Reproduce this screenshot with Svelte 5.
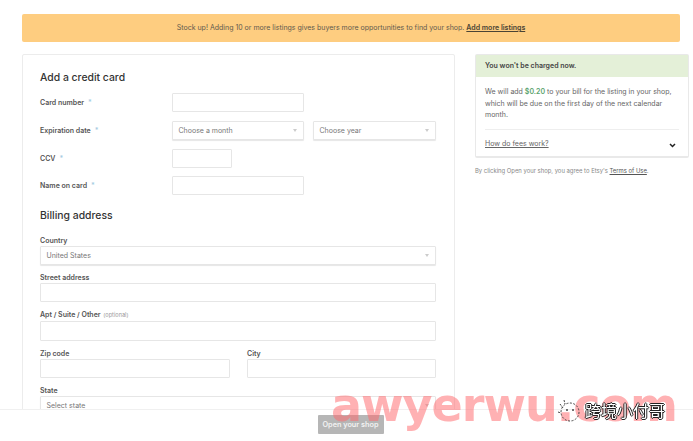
<script>
  const cardRows = [
    { label: 'Card number', size: 'wide' },
    { label: 'Expiration date', selects: true },
    { label: 'CCV', size: 'short' },
    { label: 'Name on card', size: 'wide' }
  ];
</script>

<div class="page">
  <div class="banner">
    Stock up! Adding 10 or more listings gives buyers more opportunities to find your shop. <a href="#more">Add more listings</a>
  </div>

  <div class="columns">
    <main class="card">
      <h2 class="title">Add a credit card</h2>
      <div class="rows">
        {#each cardRows as row}
          <div class="row">
            <span class="label">{row.label}<span class="req">*</span></span>
            {#if row.selects}
              <div class="select month">Choose a month<i class="caret"></i></div>
              <div class="select year">Choose year<i class="caret"></i></div>
            {:else}
              <div class="input {row.size}"></div>
            {/if}
          </div>
        {/each}
      </div>

      <h2 class="title billing">Billing address</h2>
      <div class="fields">
        <div class="field">
          <span class="label">Country</span>
          <div class="select">United States<i class="caret"></i></div>
        </div>
        <div class="field">
          <span class="label">Street address</span>
          <div class="input"></div>
        </div>
        <div class="field">
          <span class="label">Apt / Suite / Other <small>(optional)</small></span>
          <div class="input tall"></div>
        </div>
        <div class="pair">
          <div class="field">
            <span class="label">Zip code</span>
            <div class="input"></div>
          </div>
          <div class="field">
            <span class="label">City</span>
            <div class="input"></div>
          </div>
        </div>
        <div class="field">
          <span class="label">State</span>
          <div class="select">Select state<i class="caret"></i></div>
        </div>
      </div>
    </main>

    <aside class="side">
      <div class="panel">
        <div class="panel-head">You won't be charged now.</div>
        <div class="panel-body">
          <p>We will add <b>$0.20</b> to your bill for the listing in your shop, which will be due on the first day of the next calendar month.</p>
          <div class="fees">
            <a href="#fees">How do fees work?</a>
            <svg width="7" height="5" viewBox="0 0 7 5" aria-hidden="true"><path d="M1 1l2.5 2.5L6 1" fill="none" stroke="#222" stroke-width="1.5"/></svg>
          </div>
        </div>
      </div>
      <p class="terms">By clicking Open your shop, you agree to Etsy's <a href="#terms">Terms of Use</a>.</p>
    </aside>
  </div>
</div>

<footer class="bar">
  <button class="open">Open your shop</button>
</footer>

<div class="watermark">awyerwu.com</div>
<div class="wechat">
  <svg width="26" height="26" viewBox="0 0 26 26" aria-hidden="true">
    <circle cx="14" cy="15" r="9" fill="none" stroke="#444" stroke-width="1" stroke-dasharray="2 1.5"/>
    <path d="M4 7l3 4M2 15l3 1M8 3l1 4" stroke="#444" stroke-width="1" stroke-dasharray="2 1"/>
    <circle cx="11" cy="13" r="1" fill="#444"/><circle cx="17" cy="13" r="1" fill="#444"/>
  </svg>
  <span>跨境小付哥</span>
</div>

<style>
  :global(html), :global(body) {
    margin: 0;
    height: 441px;
    overflow: hidden;
    background: #fff;
  }
  .page {
    font-family: Inter, "Liberation Sans", sans-serif;
    color: #444;
    padding: 14px 4px 0 22px;
    height: 427px;
    overflow: hidden;
  }
  .banner {
    width: 658px;
    height: 28px;
    box-sizing: border-box;
    background: #fecd80;
    border-radius: 2px;
    font-size: 7px;
    line-height: 28px;
    text-align: center;
    color: #5f5a4e;
  }
  .banner a {
    color: #4a4334;
    font-weight: 600;
    text-decoration: underline;
  }
  .columns {
    display: flex;
    align-items: flex-start;
    gap: 20px;
    margin-top: 12px;
  }
  .card {
    width: 433px;
    box-sizing: border-box;
    border: 1px solid #ececec;
    padding: 16px 18px 60px 17px;
    border-radius: 2px;
  }
  .title {
    margin: 0;
    font-size: 10.4px;
    line-height: 13px;
    font-weight: 500;
    color: #333;
  }
  .billing {
    margin: 14px 0 13px;
  }
  .rows {
    margin-top: 9px;
    display: flex;
    flex-direction: column;
    gap: 8.8px;
  }
  .row {
    display: grid;
    grid-template-columns: 132px 132px 132px;
    column-gap: 0;
    align-items: center;
  }
  .label {
    font-size: 7px;
    line-height: 11px;
    font-weight: 600;
    color: #555;
  }
  .label small {
    font-size: 5.6px;
    font-weight: 400;
    color: #999;
    margin-left: 1px;
  }
  .req {
    color: #a5cbe2;
    margin-left: 4px;
  }
  .input, .select {
    box-sizing: border-box;
    height: 19px;
    border: 1px solid #e6e6e6;
    border-radius: 1px;
    background: #fff;
  }
  .input.tall {
    height: 20px;
  }
  .input.wide {
    width: 132px;
  }
  .input.short {
    width: 60px;
  }
  .select {
    position: relative;
    padding-left: 5.5px;
    font-size: 7px;
    line-height: 17px;
    color: #777;
    box-shadow: 0 1px 1px rgba(0, 0, 0, 0.1);
  }
  .select.year {
    margin-left: 9px;
  }
  .caret {
    position: absolute;
    right: 6px;
    top: 7px;
    border-left: 2.5px solid transparent;
    border-right: 2.5px solid transparent;
    border-top: 3px solid #ccc;
  }
  .fields {
    display: flex;
    flex-direction: column;
    gap: 6.8px;
  }
  .field {
    display: flex;
    flex-direction: column;
  }
  .pair {
    display: grid;
    grid-template-columns: 190px 189px;
    column-gap: 17px;
  }
  .side {
    width: 214px;
  }
  .panel {
    box-sizing: border-box;
    height: 104px;
    border: 1px solid #e9e9e9;
    border-bottom-width: 2px;
    border-radius: 2px;
  }
  .panel-head {
    height: 22px;
    padding-left: 9px;
    background: #e4f0d8;
    font-size: 7px;
    font-weight: 600;
    line-height: 21px;
    color: #444;
  }
  .panel-body {
    padding: 9px 9px 0;
  }
  .panel-body p {
    margin: 0;
    font-size: 7px;
    line-height: 11.7px;
    color: #666;
  }
  .panel-body b {
    color: #5ba36e;
    font-weight: 600;
  }
  .fees {
    display: flex;
    justify-content: space-between;
    align-items: center;
    margin-top: 8px;
    padding-top: 8px;
    border-top: 1px solid #eeeeee;
    font-size: 7px;
    line-height: 11px;
  }
  .fees svg {
    margin-top: 3px;
    margin-right: 3px;
  }
  .fees a {
    color: #666;
  }
  .terms {
    margin: 8px 0 0;
    font-size: 5.9px;
    line-height: 9px;
    color: #888;
  }
  .terms a {
    color: #555;
  }
  .bar {
    position: fixed;
    left: 0;
    right: 0;
    bottom: 0;
    height: 32px;
    background: #fff;
    border-top: 1px solid #f0f0f0;
    box-sizing: border-box;
    display: flex;
    justify-content: center;
    padding-top: 5px;
    padding-left: 8px;
  }
  .open {
    width: 66px;
    height: 19px;
    padding: 0;
    border: none;
    border-radius: 1px;
    background: #b6b6b6;
    color: #f2f2f2;
    font-family: Inter, "Liberation Sans", sans-serif;
    font-size: 7.3px;
    font-weight: 600;
  }
  .watermark {
    position: fixed;
    left: 331px;
    top: 375px;
    font-family: "DejaVu Sans", sans-serif;
    font-weight: 700;
    font-size: 46px;
    line-height: 60px;
    letter-spacing: -1px;
    color: rgba(255, 105, 110, 0.52);
    white-space: nowrap;
    pointer-events: none;
  }
  .wechat {
    position: fixed;
    left: 556px;
    top: 397px;
    display: flex;
    align-items: center;
    gap: 3px;
    pointer-events: none;
  }
  .wechat span {
    font-family: "Noto Sans CJK SC", sans-serif;
    font-size: 16px;
    line-height: 22px;
    color: #fff;
    text-shadow: -1px 0 #222, 1px 0 #222, 0 -1px #222, 0 1px #222;
  }
</style>
